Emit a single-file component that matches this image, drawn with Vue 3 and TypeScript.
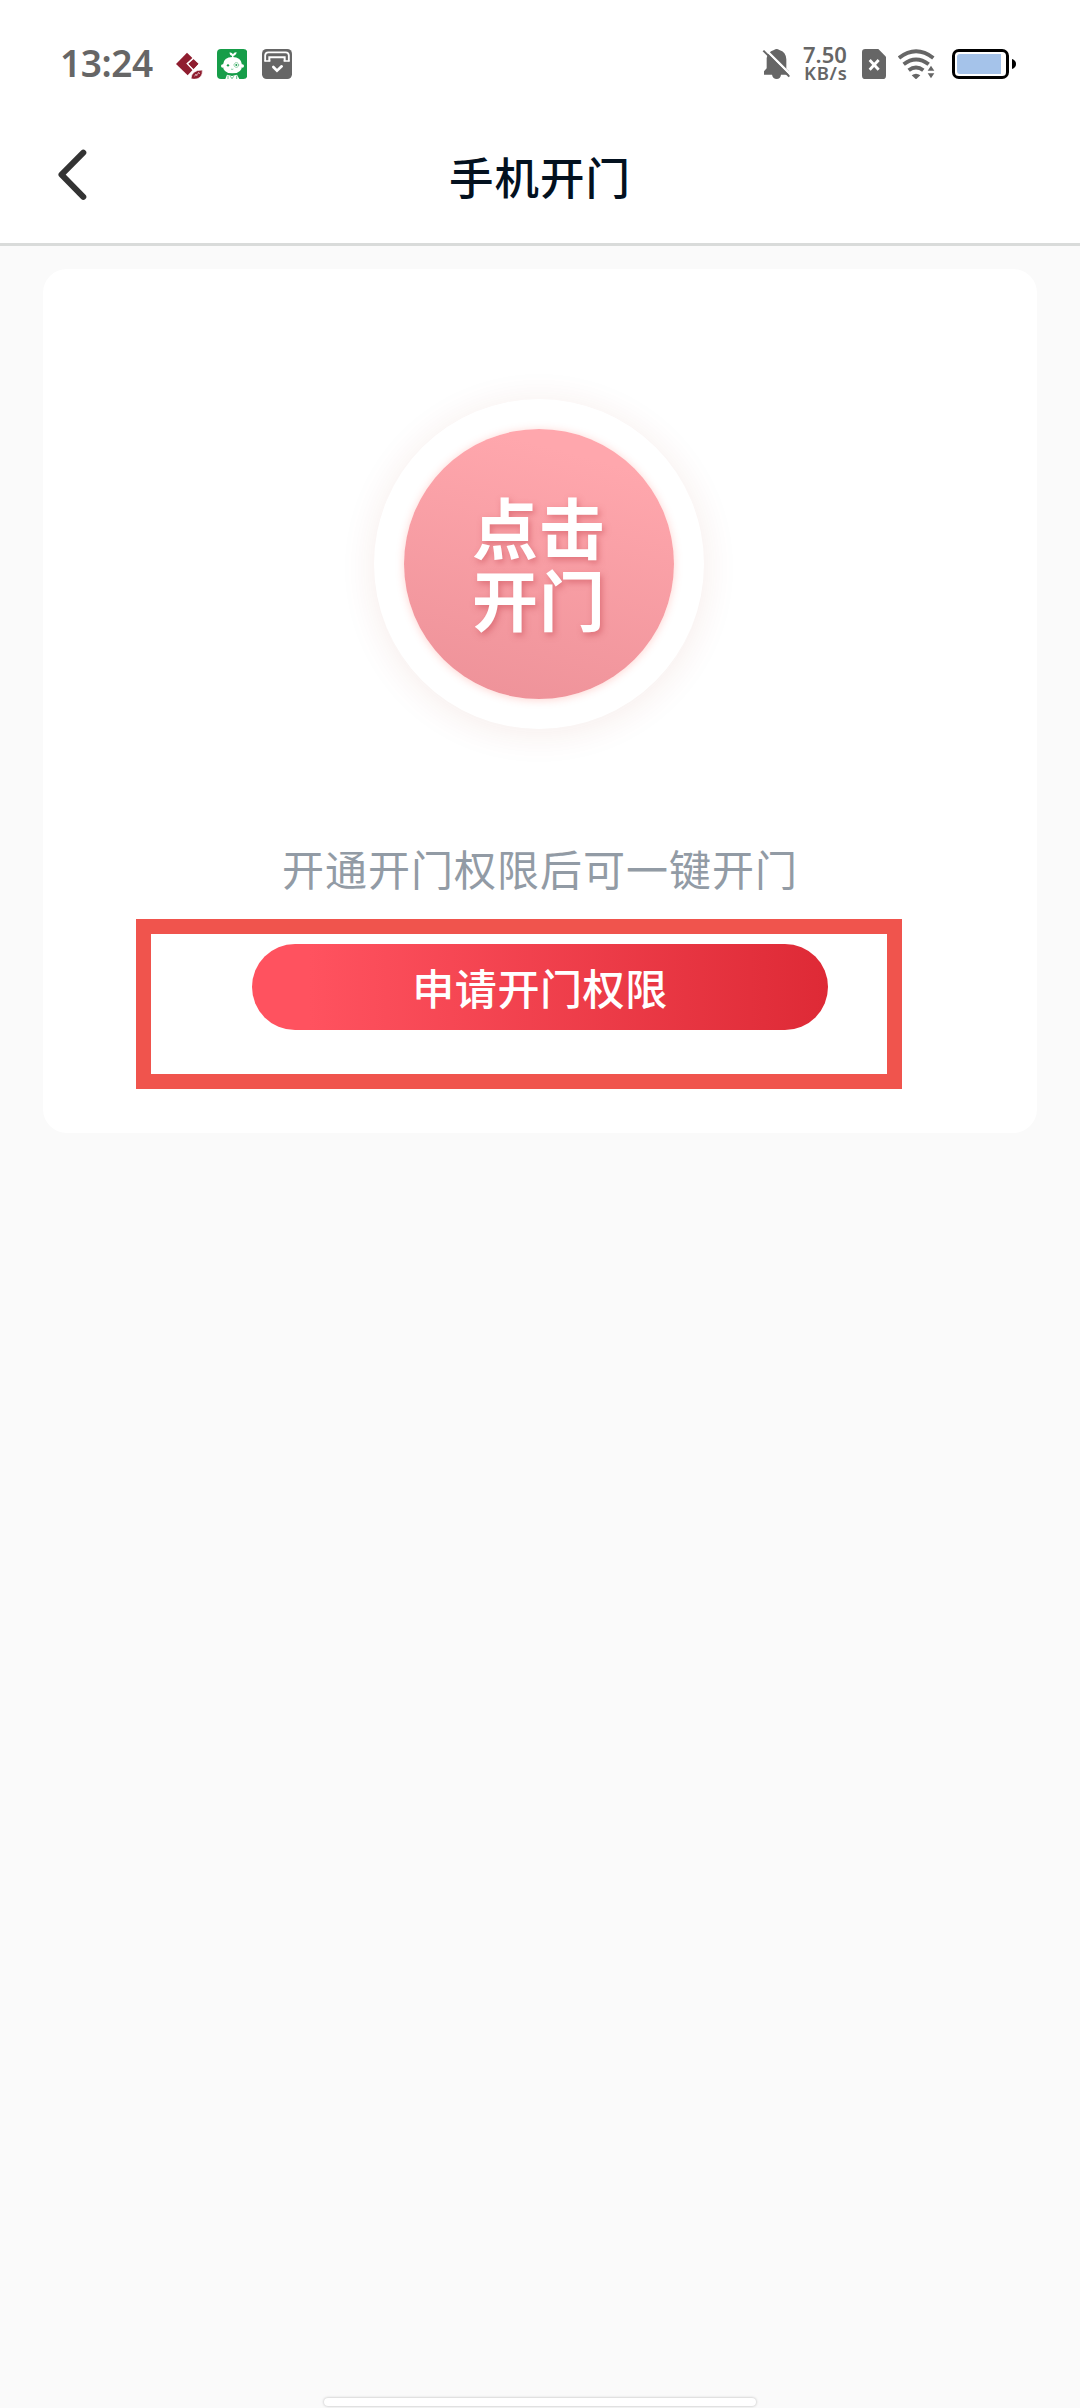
<script setup lang="ts">
const time: string = '13:24'
const speed = { value: '7.50', unit: 'KB/s' }
const title: string = '手机开门'
const openLabel: string = '点击\n开门'
const hint: string = '开通开门权限后可一键开门'
const applyLabel: string = '申请开门权限'
</script>

<template>
  <div class="screen">
    <div class="status">
      <span class="time">{{ time }}</span>
      <svg class="app-red" viewBox="405 57 84 90" width="28" height="30">
        <path d="M441 68 475 101 443 136 408 102Z" fill="#8f1d2f" />
        <path d="M462 83 442 101 460 120" fill="none" stroke="#fff" stroke-width="4.5" />
        <path d="M460 90 475 101 461 116 447 102Z" fill="#8f1d2f" />
        <path d="M453 146Q454 120 487 120Q489 147 462 148Z" fill="#8f1d2f" stroke="#fff" stroke-width="2" />
        <path d="M464 139 468 132 471 138M472 134 476 127 479 132" fill="none" stroke="#e9c9ce" stroke-width="2.5" />
      </svg>
      <svg class="app-green" viewBox="530 57 90 90" width="30" height="30">
        <rect x="530" y="57" width="91" height="90" rx="12" fill="#169d49" />
        <path d="M575 84Q577 77 570 75Q567 70 568 67Q576 68 578 73Q581 66 589 67Q587 77 579 78L580 84Z" fill="#fff" />
        <circle cx="547" cy="108" r="5" fill="#fff" />
        <circle cx="606" cy="108" r="5" fill="#fff" />
        <path d="M548 104Q550 81 576 81Q603 81 605 104Q606 130 576 130Q547 130 548 104Z" fill="#fff" />
        <circle cx="563" cy="106" r="3.5" fill="#169d49" />
        <circle cx="588" cy="105" r="7" fill="none" stroke="#169d49" stroke-width="2" stroke-dasharray="4 2" />
        <circle cx="588" cy="105" r="3" fill="#169d49" />
        <path d="M572 117Q575 120 579 117" fill="none" stroke="#169d49" stroke-width="1.5" />
        <path d="M555 147 560 134 575 138 590 134 597 147Z" fill="#fff" />
        <path d="M563 137V147M589 137V147M570 139 575 146 580 139" fill="none" stroke="#169d49" stroke-width="2" />
      </svg>
      <svg class="app-box" viewBox="666 57 90 90" width="30" height="30">
        <rect x="666" y="57" width="90" height="90" rx="14" fill="#666" />
        <path d="M675.5 94V76Q676 67 685 67H737Q746 67 746.5 76V94" fill="none" stroke="#fff" stroke-width="5.5" />
        <path d="M688 94V82H734V94" fill="none" stroke="#fff" stroke-width="6" />
        <path d="M673 93H691M731 93H749" stroke="#fff" stroke-width="5" />
        <path d="M700 111 711 122 725 109" fill="none" stroke="#fff" stroke-width="8" stroke-linecap="round" />
      </svg>
      <div class="status-right">
        <svg class="bell" viewBox="36 54 87 96" width="29" height="32">
          <path d="M72 60Q80 54 88 60Q108 66 109 88V116L117 124V134H93Q91 147 80 147Q69 147 66 134H42V124L50 115V84Q52 67 72 60Z" fill="#666" />
          <path d="M45 57 124 136" stroke="#fff" stroke-width="7" />
          <path d="M40 62 118 140" stroke="#666" stroke-width="6" />
        </svg>
        <div class="speed">
          <span class="speed-value">{{ speed.value }}</span>
          <span class="speed-unit">{{ speed.unit }}</span>
        </div>
        <svg class="sim" viewBox="336 57 72 90" width="24" height="30">
          <path d="M346 57H385L408 80V137Q408 147 398 147H346Q336 147 336 137V67Q336 57 346 57Z" fill="#666" />
          <path d="M359 90 386 119M386 90 359 119" stroke="#fff" stroke-width="8.5" />
        </svg>
        <svg class="wifi" viewBox="444 57 111 90" width="37" height="30">
          <g fill="none" stroke="#666" stroke-width="11.5">
            <path d="M447 84Q498 44 550 84" />
            <path d="M461 103Q498 74 536 103" />
            <path d="M476 121Q498 104 520 121" />
          </g>
          <path d="M485 136Q498 126 511 136L498 148Z" fill="#666" />
          <path d="M533 122 543 107 553 122ZM533 130 543 145 553 130Z" fill="#666" />
        </svg>
        <svg class="battery" viewBox="606 57 192 90" width="64" height="30">
          <rect x="610.5" y="61.5" width="162" height="81" rx="16" fill="#fff" stroke="#000" stroke-width="9" />
          <path d="M630 72H753V132H630Q621 132 621 123V81Q621 72 630 72Z" fill="#a5c3ea" />
          <path d="M786 87Q798 91 798 102Q798 113 786 117Z" fill="#000" />
        </svg>
      </div>
    </div>

    <header class="header">
      <svg class="back" viewBox="56 147 32 56" width="32" height="56">
        <path d="M83.3 152.6 61.5 174.7 83.3 196.8" fill="none" stroke="#333" stroke-width="6" stroke-linecap="round" stroke-linejoin="round" />
      </svg>
      <h1 class="title">{{ title }}</h1>
    </header>

    <main class="card">
      <button class="open">
        <span class="open-inner">
          <span class="open-label">{{ openLabel }}</span>
        </span>
      </button>
      <p class="hint">{{ hint }}</p>
      <button class="apply">{{ applyLabel }}</button>
      <div class="marker"></div>
    </main>

    <div class="home-bar"></div>
  </div>
</template>

<style>
body {
  background: #fafafa;
}
</style>

<style scoped>
.screen {
  width: 1080px;
  height: 2408px;
  display: flex;
  flex-direction: column;
  background: #fafafa;
  font-family: "Noto Sans CJK SC", sans-serif;
  overflow: hidden;
}
svg {
  display: block;
  flex: none;
}
.status {
  box-sizing: border-box;
  height: 128px;
  flex: none;
  display: flex;
  align-items: center;
  padding: 0 64px 0 60px;
  background: #fff;
  color: #666;
  font-family: "Noto Sans", sans-serif;
}
.time {
  width: 115px;
  font-size: 37px;
  line-height: 50px;
  font-weight: 600;
  letter-spacing: -0.4px;
  margin-top: -2px;
}
.app-green {
  margin-left: 14px;
}
.app-box {
  margin-left: 15px;
}
.status-right {
  margin-left: auto;
  display: flex;
  align-items: center;
}
.speed {
  width: 59px;
  margin: -2px 0 0 12px;
  display: flex;
  flex-direction: column;
  font-weight: 600;
  white-space: nowrap;
}
.speed-value {
  font-size: 22px;
  line-height: 20px;
}
.speed-unit {
  font-size: 18.5px;
  line-height: 18px;
  padding-left: 1px;
  letter-spacing: 0.7px;
}
.wifi {
  margin-left: 12px;
}
.battery {
  margin-left: 17px;
}
.header {
  height: 115px;
  flex: none;
  display: grid;
  grid-template-columns: 200px 1fr 200px;
  background: #fff;
  border-bottom: 3px solid #d9dbda;
}
.back {
  margin: 19px 0 0 56px;
}
.title {
  margin: 0;
  padding-top: 15px;
  text-align: center;
  font-size: 44.5px;
  line-height: 66px;
  font-weight: 500;
  letter-spacing: 1px;
  color: #03111f;
}
.card {
  position: relative;
  box-sizing: border-box;
  width: 994px;
  height: 864px;
  margin: 23px 43px 0;
  flex: none;
  display: flex;
  flex-direction: column;
  align-items: center;
  padding-top: 130px;
  background: #fff;
  border-radius: 24px;
}
button {
  border: 0;
  padding: 0;
  font-family: inherit;
  color: #fff;
}
.open {
  width: 330px;
  height: 330px;
  margin-right: 2px;
  flex: none;
  display: flex;
  align-items: center;
  justify-content: center;
  border-radius: 50%;
  background: #fff;
  box-shadow: 0 4px 36px rgba(150, 40, 20, 0.09);
}
.open-inner {
  box-sizing: border-box;
  width: 270px;
  height: 270px;
  padding-bottom: 7px;
  display: flex;
  align-items: center;
  justify-content: center;
  border-radius: 50%;
  background: linear-gradient(195deg, #ffa7ad 15%, #ee9299 95%);
  box-shadow: 0 1px 8px rgba(255, 120, 110, 0.32);
}
.open-label {
  white-space: pre-line;
  font-size: 66px;
  line-height: 72px;
  font-weight: 700;
  letter-spacing: 1px;
  text-shadow: 2px 3px 6px rgba(200, 70, 80, 0.5);
}
.hint {
  margin: 109px 0 0;
  font-size: 42px;
  line-height: 60px;
  letter-spacing: 1px;
  color: #929ba5;
}
.apply {
  width: 576px;
  height: 86px;
  margin-top: 46px;
  flex: none;
  border-radius: 43px;
  background: linear-gradient(90deg, #ff525f 10%, #de2a36 100%);
  font-size: 42px;
  line-height: 86px;
  font-weight: 500;
  letter-spacing: 0.6px;
}
.marker {
  position: absolute;
  left: 92.5px;
  top: 649.5px;
  width: 736px;
  height: 140px;
  border: 15px solid #f0544d;
}
.home-bar {
  width: 432px;
  height: 8px;
  margin: auto auto 2px;
  border-radius: 4px;
  background: #fff;
  box-shadow: 0 0 3px rgba(0, 0, 0, 0.28);
}
</style>
